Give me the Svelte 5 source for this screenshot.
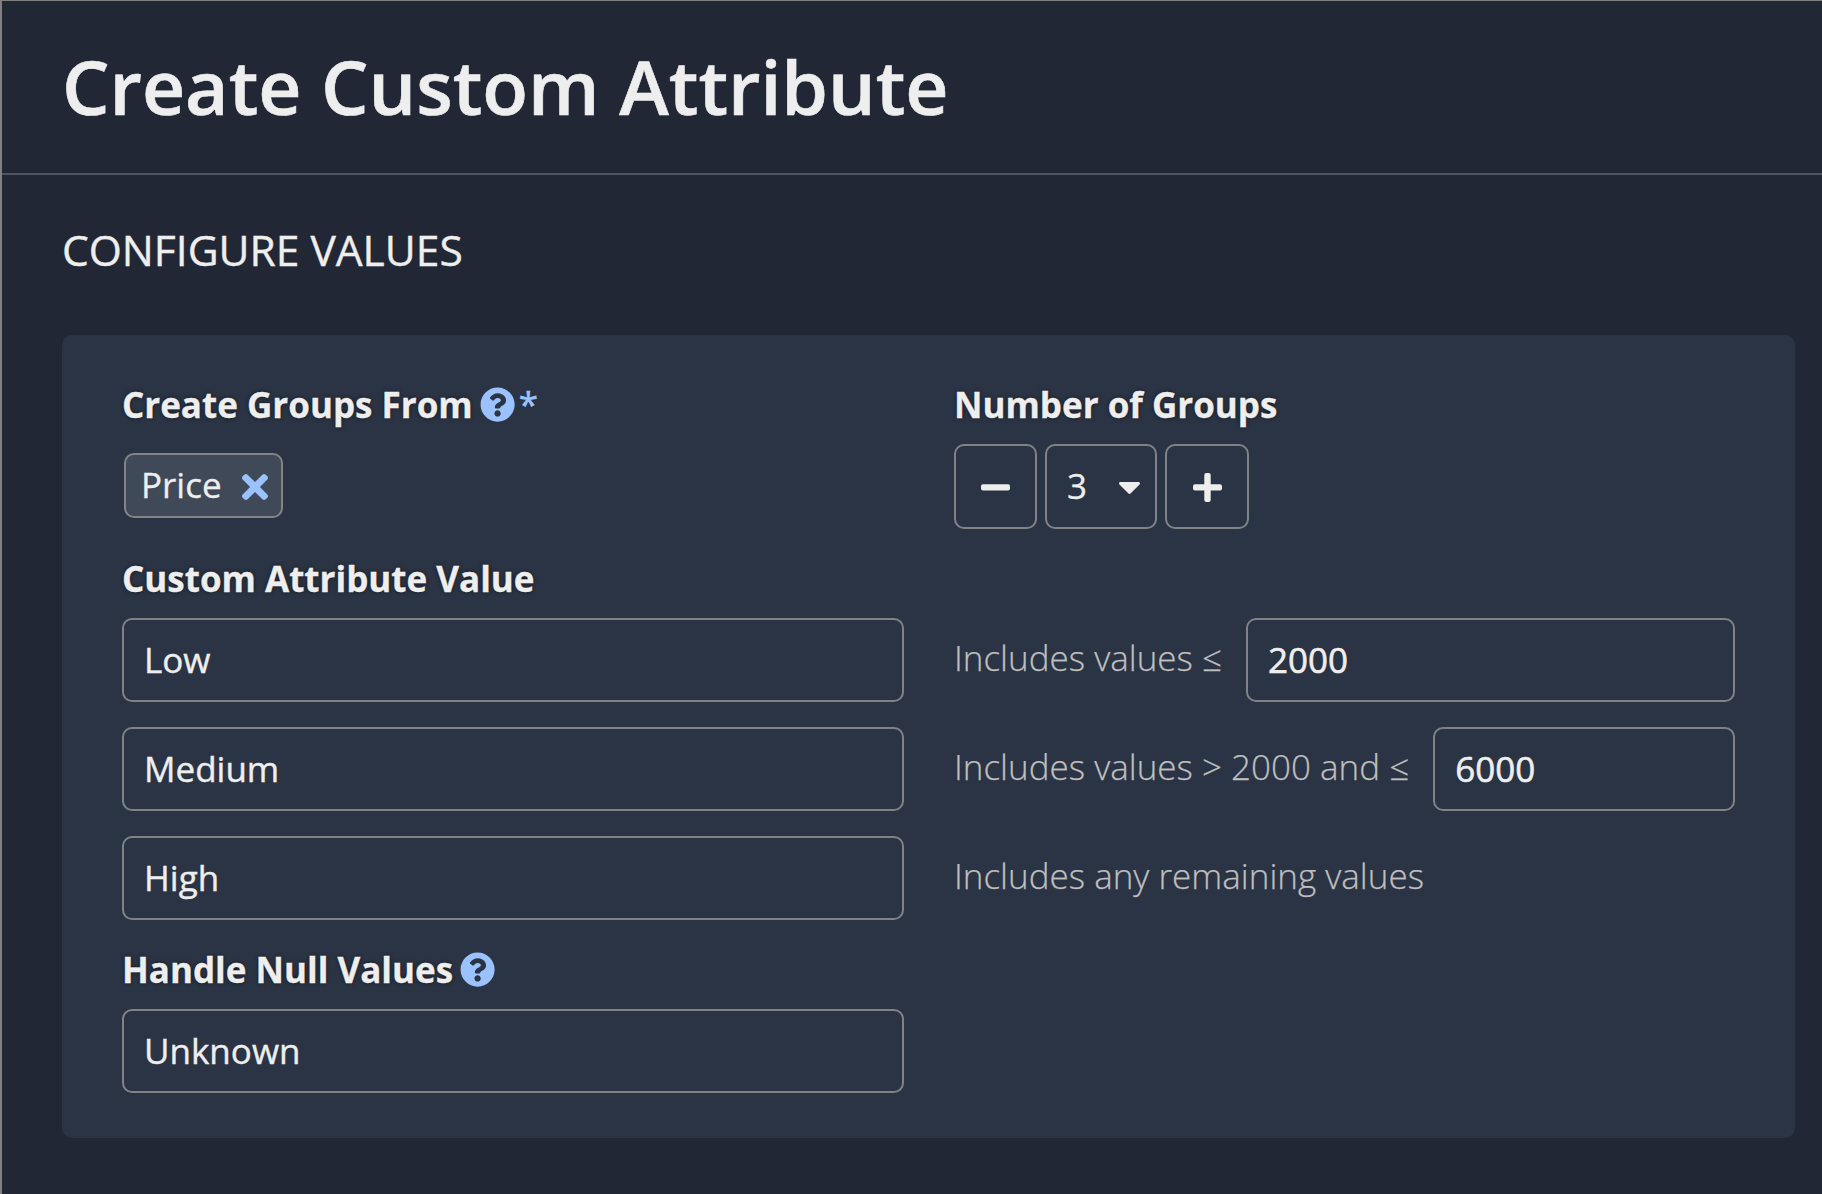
<script>
  let groupCount = $state(3);
  const rows = [
    { name: 'Low', hint: 'Includes values ≤', limit: '2000' },
    { name: 'Medium', hint: 'Includes values > 2000 and ≤', limit: '6000' },
    { name: 'High', hint: 'Includes any remaining values', limit: null }
  ];
</script>

{#snippet help()}
  <svg class="help" viewBox="0 0 512 512" aria-label="Help">
    <path d="M504 256c0 136.997-111.043 248-248 248S8 392.997 8 256C8 119.083 119.043 8 256 8s248 111.083 248 248zM262.655 90c-54.497 0-89.255 22.957-116.549 63.758-3.536 5.286-2.353 12.415 2.715 16.258l34.699 26.31c5.205 3.947 12.621 3.008 16.665-2.122 17.864-22.658 30.113-35.797 57.303-35.797 20.429 0 45.698 13.148 45.698 32.958 0 14.976-12.363 22.667-32.534 33.976C247.128 238.528 216 254.941 216 296v4c0 6.627 5.373 12 12 12h56c6.627 0 12-5.373 12-12v-1.333c0-28.462 83.186-29.647 83.186-106.667 0-58.002-60.165-102-116.531-102zM256 338c-25.365 0-46 20.635-46 46 0 25.364 20.635 46 46 46s46-20.636 46-46c0-25.365-20.635-46-46-46z" />
  </svg>
{/snippet}

<main class="dialog">
  <header><h1>Create Custom Attribute</h1></header>
  <section class="body">
    <h2>CONFIGURE VALUES</h2>
    <div class="card">
      <div class="row top">
        <div>
          <div class="label"><span>Create Groups From</span>{@render help()}<span class="required">*</span></div>
          <div class="chip">
            <span>Price</span>
            <svg class="remove" viewBox="0 80 352 352"><path d="M242.72 256l100.07-100.07c12.28-12.28 12.28-32.19 0-44.48l-22.24-22.24c-12.28-12.28-32.19-12.28-44.48 0L176 189.28 75.93 89.21c-12.28-12.28-32.19-12.28-44.48 0L9.21 111.45c-12.28 12.28-12.28 32.19 0 44.48L109.28 256 9.21 356.07c-12.28 12.28-12.28 32.19 0 44.48l22.24 22.24c12.28 12.28 32.2 12.28 44.48 0L176 322.72l100.07 100.07c12.28 12.28 32.2 12.28 44.48 0l22.24-22.24c12.28-12.28 12.28-32.19 0-44.48L242.72 256z" /></svg>
          </div>
        </div>
        <div>
          <div class="label"><span>Number of Groups</span></div>
          <div class="stepper">
            <button class="step minus" aria-label="Fewer groups" onclick={() => groupCount--}>
              <svg viewBox="0 0 29 29"><rect y="11.2" width="29" height="6.4" rx="2" /></svg>
            </button>
            <div class="select">
              <span>{groupCount}</span>
              <svg viewBox="11 192 298 169"><path d="M31.3 192h257.3c17.8 0 26.7 21.5 14.1 34.1L174.1 354.8c-7.8 7.8-20.5 7.8-28.3 0L17.2 226.1C4.6 213.5 13.5 192 31.3 192z" /></svg>
            </div>
            <button class="step plus" aria-label="More groups" onclick={() => groupCount++}>
              <svg viewBox="0 0 29 29"><rect y="11.2" width="29" height="6.4" rx="2" /><rect x="11.3" width="6.4" height="29" rx="2" /></svg>
            </button>
          </div>
        </div>
      </div>

      <div class="label"><span>Custom Attribute Value</span></div>
      {#each rows as row}
        <div class="row">
          <input value={row.name} />
          <div class="rule">
            <span class="hint">{row.hint}</span>
            {#if row.limit}<input class="limit" value={row.limit} />{/if}
          </div>
        </div>
      {/each}

      <div class="label"><span>Handle Null Values</span>{@render help()}</div>
      <div class="row last"><input value="Unknown" /></div>
    </div>
  </section>
</main>

<style>
  :global(body) {
    background: #212734;
    overflow: hidden;
  }
  .dialog {
    box-sizing: border-box;
    height: 1194px;
    border-top: 1px solid #808080;
    border-left: 2px solid #808080;
    background: #212734;
    color: #eee;
    font-family: 'Open Sans', sans-serif;
    font-size: 35px;
  }
  header {
    border-bottom: 2px solid #50555f;
    padding-left: 60px;
  }
  h1 {
    margin: 0;
    padding-bottom: 2px;
    font-size: 75px;
    font-weight: 600;
    line-height: 170px;
    -webkit-text-stroke: 0.6px #eee;
  }
  .body {
    padding: 45px 27px 0 60px;
  }
  h2 {
    margin: 0 0 55px;
    font-size: 42.5px;
    font-weight: 400;
    line-height: 60px;
    -webkit-text-stroke: 0.4px #eee;
  }
  .card {
    box-sizing: border-box;
    padding: 45px 60px 45px;
    border-radius: 10px;
    background: #2b3444;
  }
  .label {
    display: flex;
    align-items: center;
    height: 48px;
    margin-bottom: 16px;
    font-weight: 700;
    line-height: 48px;
    text-shadow: 0 0 4px rgba(0, 0, 0, 0.6);
    white-space: nowrap;
    -webkit-text-stroke: 0.3px #eee;
  }
  .label span {
    padding-top: 2px;
  }
  .help {
    width: 35.2px;
    height: 35.2px;
    margin: 1px 0 0 7.4px;
    fill: #9ac2ff;
    -webkit-text-stroke: 0;
  }
  .label .required {
    padding-top: 0;
    margin-left: 3.6px;
    color: #9ac2ff;
    font-weight: 400;
    text-shadow: none;
    -webkit-text-stroke: 0.6px #9ac2ff;
  }
  .row {
    display: grid;
    grid-template-columns: 782px 781px;
    column-gap: 50px;
    margin-bottom: 25px;
  }
  .row.last {
    margin-bottom: 0;
  }
  .chip {
    box-sizing: border-box;
    display: flex;
    align-items: center;
    justify-content: space-between;
    width: 159px;
    height: 65px;
    margin: 25px 0 0 2px;
    padding: 0 13px 0 15px;
    border: 2px solid #838485;
    border-radius: 10px;
    background: #404957;
    line-height: 60px;
  }
  .chip span {
    margin-top: -2px;
    -webkit-text-stroke: 0.3px #eee;
  }
  .remove {
    width: 26px;
    height: 26px;
    margin-top: 3px;
    fill: #9ac2ff;
  }
  .stepper {
    display: flex;
    gap: 8px;
    height: 85px;
  }
  .step,
  .select {
    box-sizing: border-box;
    display: flex;
    align-items: center;
    justify-content: center;
    border: 2px solid #808386;
    border-radius: 10px;
    background: none;
    padding: 0;
    color: inherit;
    font: inherit;
  }
  .step {
    width: 84px;
  }
  .minus {
    width: 83px;
  }
  .step svg {
    width: 29px;
    height: 29px;
    margin-top: 2px;
    fill: #eee;
  }
  .select {
    justify-content: space-between;
    width: 112px;
    padding: 0 15px 0 20px;
  }
  .select span {
    margin-top: -2px;
    -webkit-text-stroke: 0.3px #eee;
  }
  .select svg {
    width: 21px;
    height: 12px;
    margin-top: 3px;
    fill: #eee;
  }
  input {
    box-sizing: border-box;
    width: 100%;
    min-width: 0;
    height: 84px;
    padding: 0 20px 2px;
    border: 2px solid #808386;
    border-radius: 10px;
    outline: none;
    background: none;
    color: #eee;
    font: inherit;
    -webkit-text-stroke: 0.4px #eee;
  }
  .rule {
    display: flex;
    align-items: center;
    gap: 24px;
  }
  .rule .limit {
    flex: 1;
    -webkit-text-stroke: 0.6px #eee;
  }
  .hint {
    margin-top: -6px;
    color: #bfbfbf;
    font-weight: 300;
    white-space: nowrap;
    -webkit-text-stroke: 0.25px #bfbfbf;
  }
</style>
